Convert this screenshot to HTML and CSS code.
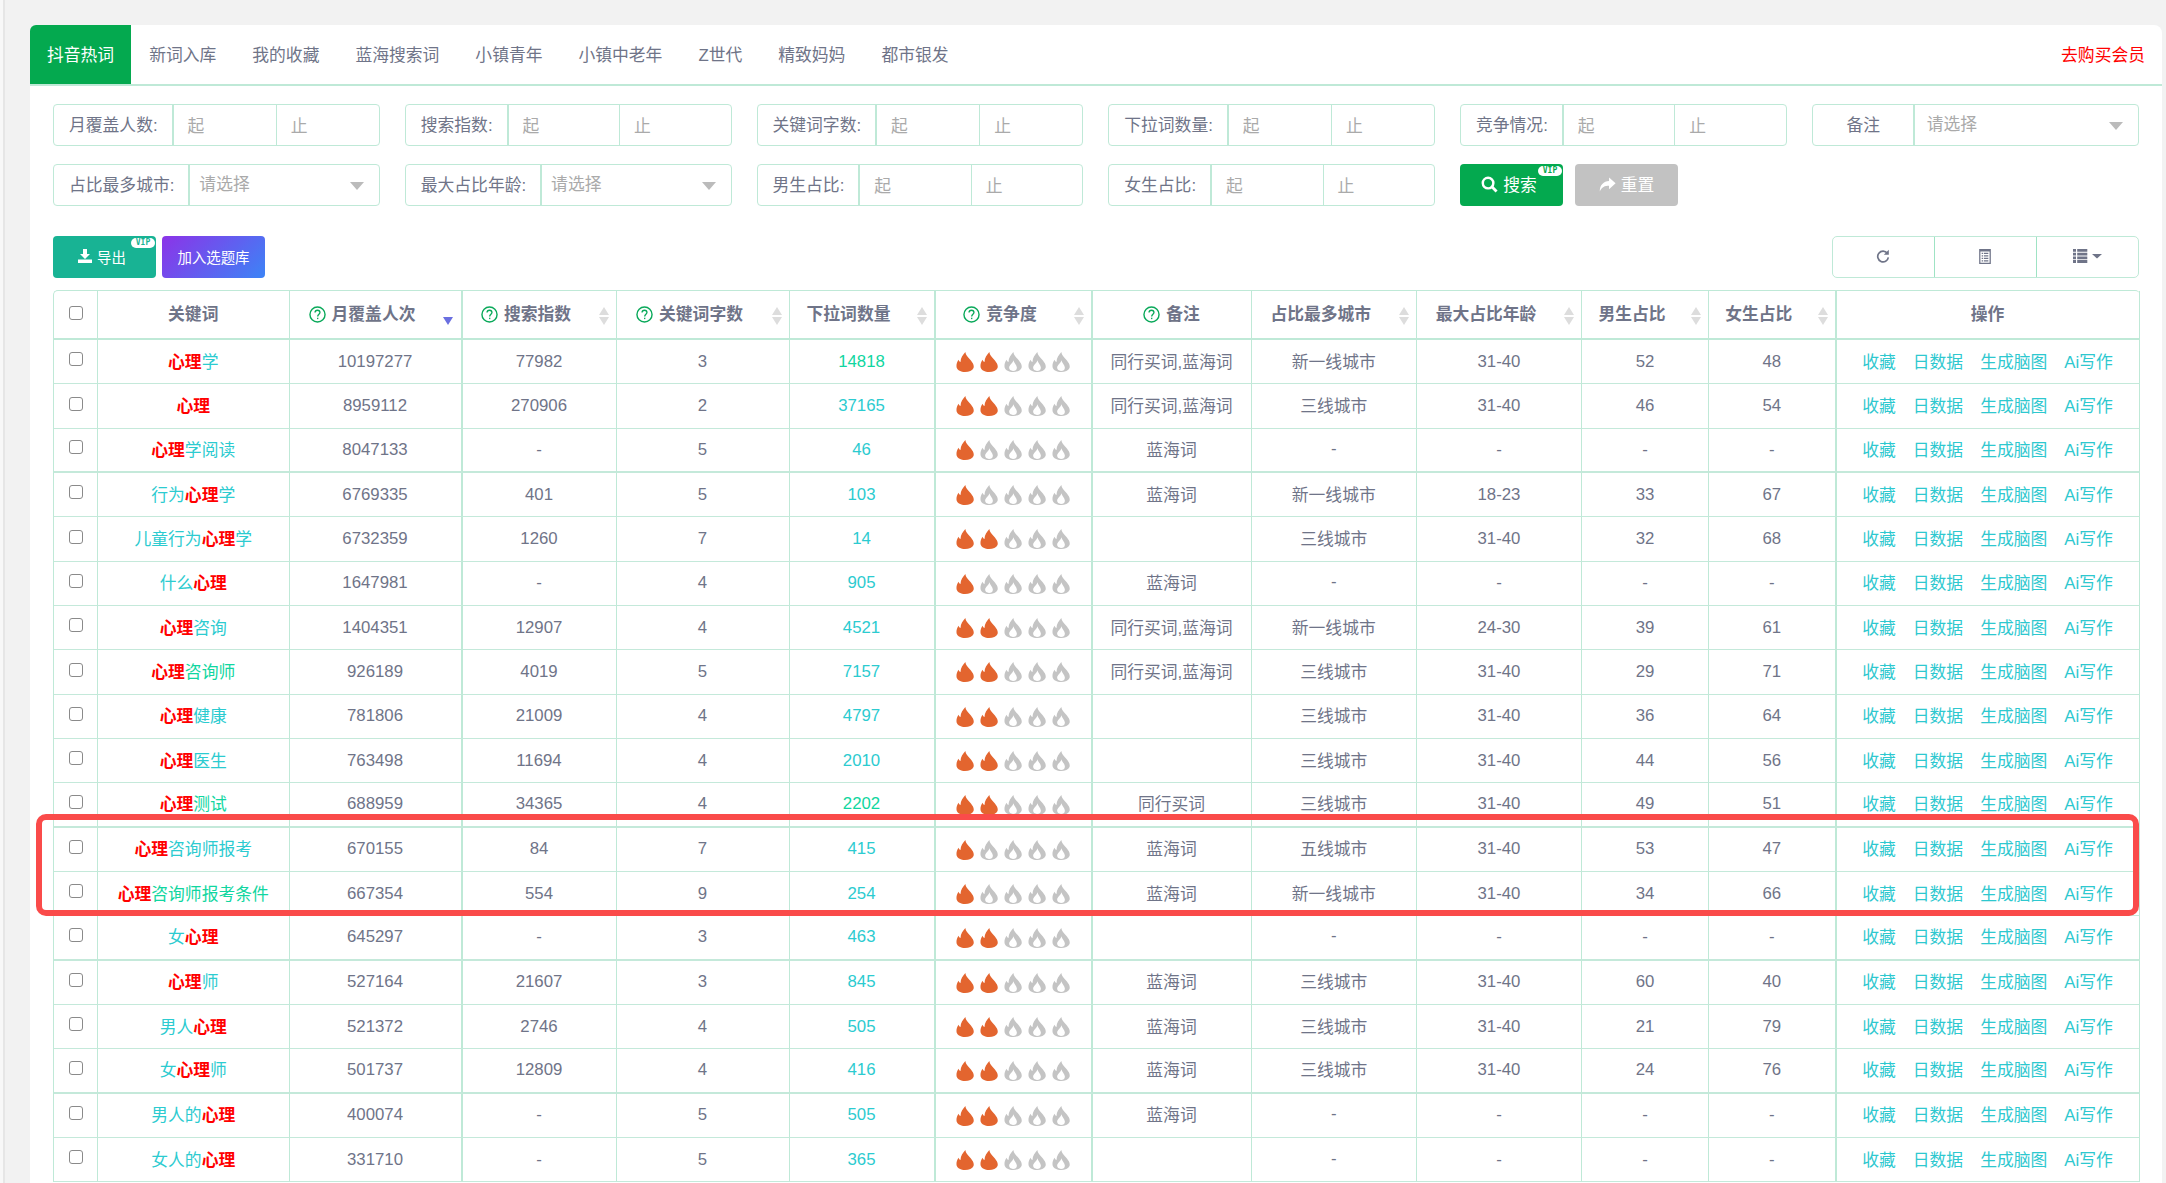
FILE: index.html
```html
<!DOCTYPE html>
<html lang="zh">
<head>
    <meta charset="UTF-8">
    <meta name="viewport" content="width=device-width, initial-scale=1.0">
    <title>抖音热词</title>
    <link rel="stylesheet" href="styles.css">
</head>
<body>
    <svg class="defs" width="0" height="0">
        <symbol id="fire-on" viewBox="0 0 24 27">
            <path d="M12.5 0C13 5 17 7.5 20 11.5C23 15.5 24.5 18 23.5 21.5C22 25 17.5 27 12 27C6.5 27 2 25 .7 21C0 17.5 1 13.5 3.2 10.5C3.8 12 4.8 13.2 6 13.5C5.8 8.5 9 4 12.5 0Z"/>
        </symbol>
        <symbol id="fire-off" viewBox="0 0 24 27">
            <path fill-rule="evenodd" d="M12.5 0C13 5 17 7.5 20 11.5C23 15.5 24.5 18 23.5 21.5C22 25 17.5 27 12 27C6.5 27 2 25 .7 21C0 17.5 1 13.5 3.2 10.5C3.8 12 4.8 13.2 6 13.5C5.8 8.5 9 4 12.5 0ZM12.5 11C12 15 7 17 6.8 21C6.8 24 9 25.5 12 25.5C15 25.5 17.3 24 17.2 21C17 17 13.5 15 12.5 11Z"/>
        </symbol>
        <symbol id="help" viewBox="0 0 18 18">
            <circle cx="9" cy="9" r="8" fill="none" stroke="#0aa95a" stroke-width="1.5"/>
            <path d="M6.4 7C6.4 5.4 7.6 4.5 9 4.5C10.5 4.5 11.6 5.5 11.6 6.9C11.6 8.6 9.2 8.8 9.2 11" fill="none" stroke="#0aa95a" stroke-width="1.4"/>
            <rect x="8.5" y="12.4" width="1.4" height="1.5" fill="#0aa95a"/>
        </symbol>
    </svg>

    <div class="card">
        <div class="tabs">
            <a class="tab active">抖音热词</a>
            <a class="tab">新词入库</a>
            <a class="tab">我的收藏</a>
            <a class="tab">蓝海搜索词</a>
            <a class="tab">小镇青年</a>
            <a class="tab">小镇中老年</a>
            <a class="tab">Z世代</a>
            <a class="tab">精致妈妈</a>
            <a class="tab">都市银发</a>
            <a class="buy-link">去购买会员</a>
        </div>

        <div class="filters">
            <div class="field"><label>月覆盖人数:</label><span class="range">起</span><span class="range">止</span></div>
            <div class="field"><label>搜索指数:</label><span class="range">起</span><span class="range">止</span></div>
            <div class="field"><label>关键词字数:</label><span class="range">起</span><span class="range">止</span></div>
            <div class="field"><label>下拉词数量:</label><span class="range">起</span><span class="range">止</span></div>
            <div class="field"><label>竞争情况:</label><span class="range">起</span><span class="range">止</span></div>
            <div class="field"><label class="label-fixed">备注</label><span class="select">请选择</span></div>
            <div class="field"><label>占比最多城市:</label><span class="select compact">请选择</span></div>
            <div class="field"><label>最大占比年龄:</label><span class="select compact">请选择</span></div>
            <div class="field"><label>男生占比:</label><span class="range">起</span><span class="range">止</span></div>
            <div class="field"><label>女生占比:</label><span class="range">起</span><span class="range">止</span></div>
            <div class="filter-buttons">
                <button class="btn btn-search">
                    <svg class="icon" viewBox="0 0 18 18"><circle cx="7.5" cy="7.5" r="5.6" fill="none" stroke="#fff" stroke-width="2.6"/><path d="M11.5 11.5L16.5 16.5" stroke="#fff" stroke-width="3"/></svg>
                    搜索<span class="vip">VIP</span>
                </button>
                <button class="btn btn-reset">
                    <svg class="icon" viewBox="0 0 22 20"><path d="M13 1L21.5 8.5L13 16V11.5C7.5 11.5 3.5 13 1 19C1 10.5 6 6 13 5.5Z" fill="#fff"/></svg>
                    重置
                </button>
            </div>
        </div>

        <div class="toolbar">
            <button class="btn btn-export">
                <svg class="icon-small" viewBox="0 0 14 14"><path d="M5 0H9V5H12L7 10L2 5H5Z" fill="#fff"/><rect x="0" y="10.5" width="14" height="3.5" fill="#fff"/></svg>
                导出<span class="vip">VIP</span>
            </button>
            <button class="btn btn-pool">加入选题库</button>
            <div class="tools">
                <span class="tool"><svg class="tool-icon" viewBox="0 0 16 18"><path d="M13.2 5.2A6.4 6.4 0 1 0 14.4 10" fill="none" stroke="#6f7488" stroke-width="2"/><path d="M15 1V7H9Z" fill="#6f7488"/></svg></span>
                <span class="tool"><svg class="tool-icon" viewBox="0 0 14 18"><path fill-rule="evenodd" d="M0 0H14V18H0ZM1.5 3V16.5H12.5V3Z" fill="#6f7488"/><path d="M3 4.5H4.6V6H3ZM5.6 4.5H11V6H5.6ZM3 7.5H4.6V9H3ZM5.6 7.5H11V9H5.6ZM3 10.5H4.6V12H3ZM5.6 10.5H11V12H5.6ZM3 13.5H4.6V15H3ZM5.6 13.5H11V15H5.6Z" fill="#6f7488"/></svg></span>
                <span class="tool"><svg class="tool-wide" viewBox="0 0 29 14"><path d="M0 0H3V2.8H0ZM4.2 0H14.3V2.8H4.2ZM0 3.7H3V6.5H0ZM4.2 3.7H14.3V6.5H4.2ZM0 7.4H3V10.2H0ZM4.2 7.4H14.3V10.2H4.2ZM0 11.1H3V13.9H0ZM4.2 11.1H14.3V13.9H4.2Z" fill="#6f7488"/><path d="M19 5H29L24 9.5Z" fill="#6f7488"/></svg></span>
            </div>
        </div>

        <table class="data-table">
            <colgroup>
                <col class="c-check"><col class="c-word"><col class="c-month"><col class="c-search"><col class="c-len"><col class="c-drop"><col class="c-fire"><col class="c-note"><col class="c-city"><col class="c-age"><col class="c-male"><col class="c-female"><col class="c-op">
            </colgroup>
            <thead>
                <tr>
                    <th><span class="check"></span></th>
                    <th>关键词</th>
                    <th class="sortable"><svg class="help"><use href="#help"/></svg>月覆盖人次<span class="sort-desc"></span></th>
                    <th class="sortable"><svg class="help"><use href="#help"/></svg>搜索指数<span class="sort"></span></th>
                    <th class="sortable"><svg class="help"><use href="#help"/></svg>关键词字数<span class="sort"></span></th>
                    <th class="sortable">下拉词数量<span class="sort"></span></th>
                    <th class="sortable"><svg class="help"><use href="#help"/></svg>竞争度<span class="sort"></span></th>
                    <th><svg class="help"><use href="#help"/></svg>备注</th>
                    <th class="sortable">占比最多城市<span class="sort"></span></th>
                    <th class="sortable">最大占比年龄<span class="sort"></span></th>
                    <th class="sortable">男生占比<span class="sort"></span></th>
                    <th class="sortable">女生占比<span class="sort"></span></th>
                    <th>操作</th>
                </tr>
            </thead>
            <tbody>
                <tr>
                    <td><span class="check"></span></td>
                    <td class="word"><b>心理</b>学</td>
                    <td>10197277</td><td>77982</td><td>3</td><td class="drop green">14818</td>
                    <td><svg class="fire on"><use href="#fire-on"/></svg><svg class="fire on"><use href="#fire-on"/></svg><svg class="fire"><use href="#fire-off"/></svg><svg class="fire"><use href="#fire-off"/></svg><svg class="fire"><use href="#fire-off"/></svg></td>
                    <td>同行买词,蓝海词</td><td>新一线城市</td><td>31-40</td><td>52</td><td>48</td>
                    <td><div class="ops"><a>收藏</a><a>日数据</a><a>生成脑图</a><a>Ai写作</a></div></td>
                </tr>
                <tr>
                    <td><span class="check"></span></td>
                    <td class="word"><b>心理</b></td>
                    <td>8959112</td><td>270906</td><td>2</td><td class="drop">37165</td>
                    <td><svg class="fire on"><use href="#fire-on"/></svg><svg class="fire on"><use href="#fire-on"/></svg><svg class="fire"><use href="#fire-off"/></svg><svg class="fire"><use href="#fire-off"/></svg><svg class="fire"><use href="#fire-off"/></svg></td>
                    <td>同行买词,蓝海词</td><td>三线城市</td><td>31-40</td><td>46</td><td>54</td>
                    <td><div class="ops"><a>收藏</a><a>日数据</a><a>生成脑图</a><a>Ai写作</a></div></td>
                </tr>
                <tr class="thick">
                    <td><span class="check"></span></td>
                    <td class="word"><b>心理</b>学阅读</td>
                    <td>8047133</td><td>-</td><td>5</td><td class="drop">46</td>
                    <td><svg class="fire on"><use href="#fire-on"/></svg><svg class="fire"><use href="#fire-off"/></svg><svg class="fire"><use href="#fire-off"/></svg><svg class="fire"><use href="#fire-off"/></svg><svg class="fire"><use href="#fire-off"/></svg></td>
                    <td>蓝海词</td><td>-</td><td>-</td><td>-</td><td>-</td>
                    <td><div class="ops"><a>收藏</a><a>日数据</a><a>生成脑图</a><a>Ai写作</a></div></td>
                </tr>
                <tr>
                    <td><span class="check"></span></td>
                    <td class="word">行为<b>心理</b>学</td>
                    <td>6769335</td><td>401</td><td>5</td><td class="drop">103</td>
                    <td><svg class="fire on"><use href="#fire-on"/></svg><svg class="fire"><use href="#fire-off"/></svg><svg class="fire"><use href="#fire-off"/></svg><svg class="fire"><use href="#fire-off"/></svg><svg class="fire"><use href="#fire-off"/></svg></td>
                    <td>蓝海词</td><td>新一线城市</td><td>18-23</td><td>33</td><td>67</td>
                    <td><div class="ops"><a>收藏</a><a>日数据</a><a>生成脑图</a><a>Ai写作</a></div></td>
                </tr>
                <tr>
                    <td><span class="check"></span></td>
                    <td class="word">儿童行为<b>心理</b>学</td>
                    <td>6732359</td><td>1260</td><td>7</td><td class="drop">14</td>
                    <td><svg class="fire on"><use href="#fire-on"/></svg><svg class="fire on"><use href="#fire-on"/></svg><svg class="fire"><use href="#fire-off"/></svg><svg class="fire"><use href="#fire-off"/></svg><svg class="fire"><use href="#fire-off"/></svg></td>
                    <td></td><td>三线城市</td><td>31-40</td><td>32</td><td>68</td>
                    <td><div class="ops"><a>收藏</a><a>日数据</a><a>生成脑图</a><a>Ai写作</a></div></td>
                </tr>
                <tr>
                    <td><span class="check"></span></td>
                    <td class="word">什么<b>心理</b></td>
                    <td>1647981</td><td>-</td><td>4</td><td class="drop">905</td>
                    <td><svg class="fire on"><use href="#fire-on"/></svg><svg class="fire"><use href="#fire-off"/></svg><svg class="fire"><use href="#fire-off"/></svg><svg class="fire"><use href="#fire-off"/></svg><svg class="fire"><use href="#fire-off"/></svg></td>
                    <td>蓝海词</td><td>-</td><td>-</td><td>-</td><td>-</td>
                    <td><div class="ops"><a>收藏</a><a>日数据</a><a>生成脑图</a><a>Ai写作</a></div></td>
                </tr>
                <tr>
                    <td><span class="check"></span></td>
                    <td class="word"><b>心理</b>咨询</td>
                    <td>1404351</td><td>12907</td><td>4</td><td class="drop">4521</td>
                    <td><svg class="fire on"><use href="#fire-on"/></svg><svg class="fire on"><use href="#fire-on"/></svg><svg class="fire"><use href="#fire-off"/></svg><svg class="fire"><use href="#fire-off"/></svg><svg class="fire"><use href="#fire-off"/></svg></td>
                    <td>同行买词,蓝海词</td><td>新一线城市</td><td>24-30</td><td>39</td><td>61</td>
                    <td><div class="ops"><a>收藏</a><a>日数据</a><a>生成脑图</a><a>Ai写作</a></div></td>
                </tr>
                <tr>
                    <td><span class="check"></span></td>
                    <td class="word green"><b>心理</b>咨询师</td>
                    <td>926189</td><td>4019</td><td>5</td><td class="drop">7157</td>
                    <td><svg class="fire on"><use href="#fire-on"/></svg><svg class="fire on"><use href="#fire-on"/></svg><svg class="fire"><use href="#fire-off"/></svg><svg class="fire"><use href="#fire-off"/></svg><svg class="fire"><use href="#fire-off"/></svg></td>
                    <td>同行买词,蓝海词</td><td>三线城市</td><td>31-40</td><td>29</td><td>71</td>
                    <td><div class="ops"><a>收藏</a><a>日数据</a><a>生成脑图</a><a>Ai写作</a></div></td>
                </tr>
                <tr>
                    <td><span class="check"></span></td>
                    <td class="word"><b>心理</b>健康</td>
                    <td>781806</td><td>21009</td><td>4</td><td class="drop">4797</td>
                    <td><svg class="fire on"><use href="#fire-on"/></svg><svg class="fire on"><use href="#fire-on"/></svg><svg class="fire"><use href="#fire-off"/></svg><svg class="fire"><use href="#fire-off"/></svg><svg class="fire"><use href="#fire-off"/></svg></td>
                    <td></td><td>三线城市</td><td>31-40</td><td>36</td><td>64</td>
                    <td><div class="ops"><a>收藏</a><a>日数据</a><a>生成脑图</a><a>Ai写作</a></div></td>
                </tr>
                <tr>
                    <td><span class="check"></span></td>
                    <td class="word"><b>心理</b>医生</td>
                    <td>763498</td><td>11694</td><td>4</td><td class="drop">2010</td>
                    <td><svg class="fire on"><use href="#fire-on"/></svg><svg class="fire on"><use href="#fire-on"/></svg><svg class="fire"><use href="#fire-off"/></svg><svg class="fire"><use href="#fire-off"/></svg><svg class="fire"><use href="#fire-off"/></svg></td>
                    <td></td><td>三线城市</td><td>31-40</td><td>44</td><td>56</td>
                    <td><div class="ops"><a>收藏</a><a>日数据</a><a>生成脑图</a><a>Ai写作</a></div></td>
                </tr>
                <tr class="thick">
                    <td><span class="check"></span></td>
                    <td class="word green"><b>心理</b>测试</td>
                    <td>688959</td><td>34365</td><td>4</td><td class="drop green">2202</td>
                    <td><svg class="fire on"><use href="#fire-on"/></svg><svg class="fire on"><use href="#fire-on"/></svg><svg class="fire"><use href="#fire-off"/></svg><svg class="fire"><use href="#fire-off"/></svg><svg class="fire"><use href="#fire-off"/></svg></td>
                    <td>同行买词</td><td>三线城市</td><td>31-40</td><td>49</td><td>51</td>
                    <td><div class="ops"><a>收藏</a><a>日数据</a><a>生成脑图</a><a>Ai写作</a></div></td>
                </tr>
                <tr>
                    <td><span class="check"></span></td>
                    <td class="word"><b>心理</b>咨询师报考</td>
                    <td>670155</td><td>84</td><td>7</td><td class="drop">415</td>
                    <td><svg class="fire on"><use href="#fire-on"/></svg><svg class="fire"><use href="#fire-off"/></svg><svg class="fire"><use href="#fire-off"/></svg><svg class="fire"><use href="#fire-off"/></svg><svg class="fire"><use href="#fire-off"/></svg></td>
                    <td>蓝海词</td><td>五线城市</td><td>31-40</td><td>53</td><td>47</td>
                    <td><div class="ops"><a>收藏</a><a>日数据</a><a>生成脑图</a><a>Ai写作</a></div></td>
                </tr>
                <tr>
                    <td><span class="check"></span></td>
                    <td class="word green"><b>心理</b>咨询师报考条件</td>
                    <td>667354</td><td>554</td><td>9</td><td class="drop">254</td>
                    <td><svg class="fire on"><use href="#fire-on"/></svg><svg class="fire"><use href="#fire-off"/></svg><svg class="fire"><use href="#fire-off"/></svg><svg class="fire"><use href="#fire-off"/></svg><svg class="fire"><use href="#fire-off"/></svg></td>
                    <td>蓝海词</td><td>新一线城市</td><td>31-40</td><td>34</td><td>66</td>
                    <td><div class="ops"><a>收藏</a><a>日数据</a><a>生成脑图</a><a>Ai写作</a></div></td>
                </tr>
                <tr class="thick">
                    <td><span class="check"></span></td>
                    <td class="word">女<b>心理</b></td>
                    <td>645297</td><td>-</td><td>3</td><td class="drop">463</td>
                    <td><svg class="fire on"><use href="#fire-on"/></svg><svg class="fire on"><use href="#fire-on"/></svg><svg class="fire"><use href="#fire-off"/></svg><svg class="fire"><use href="#fire-off"/></svg><svg class="fire"><use href="#fire-off"/></svg></td>
                    <td></td><td>-</td><td>-</td><td>-</td><td>-</td>
                    <td><div class="ops"><a>收藏</a><a>日数据</a><a>生成脑图</a><a>Ai写作</a></div></td>
                </tr>
                <tr>
                    <td><span class="check"></span></td>
                    <td class="word"><b>心理</b>师</td>
                    <td>527164</td><td>21607</td><td>3</td><td class="drop">845</td>
                    <td><svg class="fire on"><use href="#fire-on"/></svg><svg class="fire on"><use href="#fire-on"/></svg><svg class="fire"><use href="#fire-off"/></svg><svg class="fire"><use href="#fire-off"/></svg><svg class="fire"><use href="#fire-off"/></svg></td>
                    <td>蓝海词</td><td>三线城市</td><td>31-40</td><td>60</td><td>40</td>
                    <td><div class="ops"><a>收藏</a><a>日数据</a><a>生成脑图</a><a>Ai写作</a></div></td>
                </tr>
                <tr>
                    <td><span class="check"></span></td>
                    <td class="word">男人<b>心理</b></td>
                    <td>521372</td><td>2746</td><td>4</td><td class="drop">505</td>
                    <td><svg class="fire on"><use href="#fire-on"/></svg><svg class="fire on"><use href="#fire-on"/></svg><svg class="fire"><use href="#fire-off"/></svg><svg class="fire"><use href="#fire-off"/></svg><svg class="fire"><use href="#fire-off"/></svg></td>
                    <td>蓝海词</td><td>三线城市</td><td>31-40</td><td>21</td><td>79</td>
                    <td><div class="ops"><a>收藏</a><a>日数据</a><a>生成脑图</a><a>Ai写作</a></div></td>
                </tr>
                <tr class="thick">
                    <td><span class="check"></span></td>
                    <td class="word">女<b>心理</b>师</td>
                    <td>501737</td><td>12809</td><td>4</td><td class="drop">416</td>
                    <td><svg class="fire on"><use href="#fire-on"/></svg><svg class="fire on"><use href="#fire-on"/></svg><svg class="fire"><use href="#fire-off"/></svg><svg class="fire"><use href="#fire-off"/></svg><svg class="fire"><use href="#fire-off"/></svg></td>
                    <td>蓝海词</td><td>三线城市</td><td>31-40</td><td>24</td><td>76</td>
                    <td><div class="ops"><a>收藏</a><a>日数据</a><a>生成脑图</a><a>Ai写作</a></div></td>
                </tr>
                <tr>
                    <td><span class="check"></span></td>
                    <td class="word">男人的<b>心理</b></td>
                    <td>400074</td><td>-</td><td>5</td><td class="drop">505</td>
                    <td><svg class="fire on"><use href="#fire-on"/></svg><svg class="fire on"><use href="#fire-on"/></svg><svg class="fire"><use href="#fire-off"/></svg><svg class="fire"><use href="#fire-off"/></svg><svg class="fire"><use href="#fire-off"/></svg></td>
                    <td>蓝海词</td><td>-</td><td>-</td><td>-</td><td>-</td>
                    <td><div class="ops"><a>收藏</a><a>日数据</a><a>生成脑图</a><a>Ai写作</a></div></td>
                </tr>
                <tr>
                    <td><span class="check"></span></td>
                    <td class="word">女人的<b>心理</b></td>
                    <td>331710</td><td>-</td><td>5</td><td class="drop">365</td>
                    <td><svg class="fire on"><use href="#fire-on"/></svg><svg class="fire on"><use href="#fire-on"/></svg><svg class="fire"><use href="#fire-off"/></svg><svg class="fire"><use href="#fire-off"/></svg><svg class="fire"><use href="#fire-off"/></svg></td>
                    <td></td><td>-</td><td>-</td><td>-</td><td>-</td>
                    <td><div class="ops"><a>收藏</a><a>日数据</a><a>生成脑图</a><a>Ai写作</a></div></td>
                </tr>
            </tbody>
        </table>
    </div>

    <div class="red-mark"></div>
</body>
</html>
```

FILE: styles.css
```css
html, body {
    height: 100%;
    margin: 0;
    overflow: hidden;
}
body {
    position: relative;
    box-sizing: border-box;
    padding: 25px 4px 0 30px;
    font-family: "Liberation Sans", "Noto Sans CJK SC", sans-serif;
    font-size: 16.8px;
    color: #6f7488;
    background: linear-gradient(to right, #f8f8f8 3px, #e6e6e6 3px, #e6e6e6 5px, #f2f2f2 5px);
}
.defs {
    position: absolute;
}
.card {
    background-color: #fff;
    border-radius: 8px 8px 0 0;
    min-height: 1200px;
}

/* tabs */
.tabs {
    display: flex;
    align-items: stretch;
    height: 59px;
    border-bottom: 2px solid #bfe9d7;
}
.tab {
    display: flex;
    align-items: center;
    padding: 0 18px 2px;
}
.tab.active {
    background-color: #04a94f;
    color: #fff;
    border-radius: 6px 0 0 0;
    padding: 0 17px 2px;
}
.buy-link {
    margin-left: auto;
    align-self: center;
    margin-right: 17px;
    padding-bottom: 2px;
    color: #f00;
}

/* filters */
.filters {
    display: grid;
    grid-template-columns: repeat(6, 1fr);
    gap: 18px 25px;
    padding: 18px 23.5px 0 23px;
}
.field {
    display: flex;
    height: 42px;
    box-sizing: border-box;
    border: 1px solid #bfe9d7;
    border-radius: 4px;
}
.field label {
    display: flex;
    align-items: center;
    padding: 0 14px 2px 15px;
    white-space: nowrap;
    border-right: 2px solid #bfe9d7;
}
.field .label-fixed {
    width: 102px;
    box-sizing: border-box;
    justify-content: center;
}
.range {
    flex: 1;
    display: flex;
    align-items: center;
    padding-left: 14px;
    color: #aaa;
}
.range + .range {
    border-left: 1px solid #bfe9d7;
}
.select {
    flex: 1;
    position: relative;
    display: flex;
    align-items: center;
    padding: 0 0 4px 12px;
    color: #aaa;
}
.select.compact {
    padding-left: 9px;
}
.select::after {
    content: "";
    position: absolute;
    right: 15px;
    top: 17px;
    border-left: 7px solid transparent;
    border-right: 7px solid transparent;
    border-top: 8px solid #bbb;
}
.filter-buttons {
    display: flex;
    gap: 12px;
}

/* buttons */
.btn {
    position: relative;
    display: inline-flex;
    align-items: center;
    justify-content: center;
    gap: 5px;
    height: 42px;
    padding: 0 0 2px;
    border: none;
    border-radius: 4px;
    color: #fff;
    font-family: inherit;
    font-size: 16.8px;
}
.btn-search {
    width: 103px;
    background-color: #04a94f;
}
.btn-reset {
    width: 103px;
    background-color: #c2c2c2;
}
.icon {
    width: 17px;
    height: 17px;
}
.icon-small {
    width: 14px;
    height: 14px;
}
.vip {
    position: absolute;
    top: 2px;
    right: 1px;
    width: 24px;
    height: 10px;
    border-radius: 5px;
    background-color: #fff;
    color: #04a94f;
    font-family: "DejaVu Sans Mono", monospace;
    font-size: 8px;
    font-weight: bold;
    line-height: 10px;
    text-align: center;
}
.toolbar {
    display: flex;
    gap: 6px;
    margin: 30px 23.5px 12px 23px;
}
.btn-export {
    width: 103px;
    font-size: 14.4px;
    background-color: #18b394;
}
.btn-export .vip {
    color: #18b394;
}
.btn-pool {
    width: 103px;
    font-size: 14.4px;
    background: linear-gradient(135deg, #8c33e8, #3c84f6);
}
.tools {
    display: flex;
    margin-left: auto;
    width: 307px;
    height: 42px;
    box-sizing: border-box;
    border: 1px solid #bfe9d7;
    border-radius: 5px;
}
.tool {
    flex: 1;
    display: flex;
    align-items: center;
    justify-content: center;
    padding-bottom: 2px;
}
.tool + .tool {
    border-left: 1px solid #9fe3c4;
}
.tool-icon {
    width: 14px;
    height: 15px;
}
.tool-wide {
    width: 29px;
    height: 14px;
}

/* table */
.data-table {
    width: 2086px;
    margin-left: 23px;
    table-layout: fixed;
    border-collapse: separate;
    border-spacing: 0;
    border-top: 1px solid #bfe9d7;
    border-left: 1px solid #bfe9d7;
    border-radius: 5px 5px 0 0;
    text-align: center;
}
.c-check { width: 44px; }
.c-word { width: 191.5px; }
.c-month { width: 173px; }
.c-search { width: 154px; }
.c-len { width: 173px; }
.c-drop { width: 146px; }
.c-fire { width: 157px; }
.c-note { width: 159px; }
.c-city { width: 165.5px; }
.c-age { width: 165px; }
.c-male { width: 127px; }
.c-female { width: 127.5px; }
.c-op { width: 303px; }
.data-table th, .data-table td {
    box-sizing: border-box;
    padding: 0;
    border-right: 1px solid #bfe9d7;
    border-bottom: 1px solid #c4e9da;
    white-space: nowrap;
}
.data-table th {
    position: relative;
    height: 49px;
    padding-bottom: 4px;
    font-weight: bold;
    border-bottom: 2px solid #bfe9d7;
}
.data-table td {
    height: 44.34px;
}
.data-table th:first-child {
    padding-bottom: 5px;
}
.data-table td:first-child {
    padding-bottom: 6px;
}
/* 中文列比数字列略高一点 */
.data-table td:nth-child(2),
.data-table td:nth-child(8),
.data-table td:nth-child(9),
.data-table td:nth-child(13) {
    padding-bottom: 2px;
}
.data-table th:nth-child(3), .data-table td:nth-child(3),
.data-table th:nth-child(6), .data-table td:nth-child(6),
.data-table th:nth-child(7), .data-table td:nth-child(7),
.data-table th:nth-child(12), .data-table td:nth-child(12) {
    border-right-width: 2px;
}
.data-table tr.thick td {
    border-bottom-width: 2px;
}
.check {
    display: inline-block;
    width: 14px;
    height: 14px;
    box-sizing: border-box;
    border: 1.5px solid #8a8a8a;
    border-radius: 3px;
    vertical-align: middle;
}
.help {
    width: 17px;
    height: 17px;
    margin-right: 6px;
    vertical-align: -3px;
}
.data-table .sortable {
    padding-right: 26px;
}
.sort, .sort-desc {
    position: absolute;
    right: 6px;
    top: 16px;
    width: 11px;
    height: 18px;
}
.sort::before, .sort::after, .sort-desc::after {
    content: "";
    position: absolute;
    left: 0;
    border-left: 5.5px solid transparent;
    border-right: 5.5px solid transparent;
}
.sort::before {
    top: 0;
    border-bottom: 8px solid #ddd;
}
.sort::after {
    bottom: 0;
    border-top: 8px solid #ddd;
}
.sort-desc {
    right: 7px;
}
.sort-desc::after {
    bottom: 0;
    border-top: 8px solid #6a6fe0;
}
.word, .drop {
    color: #2ccbd0;
}
.word.green, .drop.green {
    color: #10d6a0;
}
.word b {
    color: #f00;
}
.fire {
    width: 18px;
    height: 20px;
    fill: #c4c4c4;
    vertical-align: middle;
}
.fire + .fire {
    margin-left: 6px;
}
.fire.on {
    fill: #e3652f;
}
.ops {
    display: flex;
    justify-content: center;
    gap: 17px;
}
.ops a {
    color: #2ec8cf;
}

/* 红框标注 */
.red-mark {
    position: absolute;
    left: 36px;
    top: 814px;
    width: 2103px;
    height: 102px;
    box-sizing: border-box;
    border: 6px solid #fa4b4a;
    border-radius: 10px;
}
```
